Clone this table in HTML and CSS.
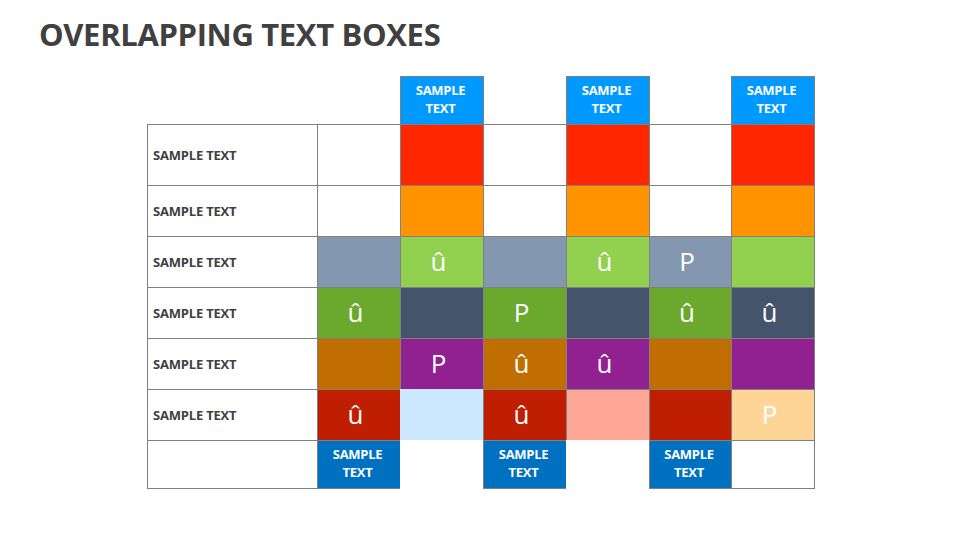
FILE: index.html
```html
<!DOCTYPE html>
<html>
<head>
<meta charset="utf-8">
<link rel="stylesheet" href="styles.css">
</head>
<body>
<h1 class="title">OVERLAPPING TEXT BOXES</h1>
<div class="board">
  <div class="c void wide"></div>
  <div class="c head">SAMPLE<br>TEXT</div>
  <div class="c void"></div>
  <div class="c head">SAMPLE<br>TEXT</div>
  <div class="c void"></div>
  <div class="c head">SAMPLE<br>TEXT</div>

  <div class="c label">SAMPLE TEXT</div>
  <div class="c white"></div>
  <div class="c red"></div>
  <div class="c white"></div>
  <div class="c red"></div>
  <div class="c white"></div>
  <div class="c red"></div>

  <div class="c label">SAMPLE TEXT</div>
  <div class="c white"></div>
  <div class="c orange"></div>
  <div class="c white"></div>
  <div class="c orange"></div>
  <div class="c white"></div>
  <div class="c orange"></div>

  <div class="c label">SAMPLE TEXT</div>
  <div class="c slate"></div>
  <div class="c lime g">û</div>
  <div class="c slate"></div>
  <div class="c lime g">û</div>
  <div class="c slate g">P</div>
  <div class="c lime"></div>

  <div class="c label">SAMPLE TEXT</div>
  <div class="c green g">û</div>
  <div class="c navy"></div>
  <div class="c green g">P</div>
  <div class="c navy"></div>
  <div class="c green g">û</div>
  <div class="c navy g">û</div>

  <div class="c label">SAMPLE TEXT</div>
  <div class="c brown"></div>
  <div class="c purple g">P</div>
  <div class="c brown g">û</div>
  <div class="c purple g">û</div>
  <div class="c brown"></div>
  <div class="c purple"></div>

  <div class="c label">SAMPLE TEXT</div>
  <div class="c crimson g">û</div>
  <div class="c sky plain"></div>
  <div class="c crimson g">û</div>
  <div class="c salmon"></div>
  <div class="c crimson"></div>
  <div class="c peach g">P</div>

  <div class="c white"></div>
  <div class="c foot">SAMPLE<br>TEXT</div>
  <div class="c white plain"></div>
  <div class="c foot">SAMPLE<br>TEXT</div>
  <div class="c white plain"></div>
  <div class="c foot">SAMPLE<br>TEXT</div>
  <div class="c white"></div>
</div>
</body>
</html>
```
FILE: styles.css
```css
html, body {
  margin: 0;
  padding: 0;
  background: #ffffff;
}
body {
  width: 960px;
  height: 540px;
  overflow: hidden;
  font-family: "Open Sans", "Liberation Sans", sans-serif;
}
.title {
  margin: 0;
  padding: 14px 0 0 39px;
  font-size: 31px;
  line-height: 40px;
  font-weight: 700;
  color: #404040;
  letter-spacing: -0.35px;
  height: 63px;
  box-sizing: border-box;
}
.board {
  margin-left: 148px;
  margin-top: 14px;
  display: grid;
  grid-template-columns: 170px 83px 83px 83px 83px 82px 83px;
  grid-template-rows: 48px 61px 51px 51px 51px 51px 51px 48px;
  width: 667px;
}
.c {
  margin: -1px 0 0 -1px;
  border: 1px solid #808080;
  display: flex;
  align-items: center;
  justify-content: center;
  color: #ffffff;
}
.void {
  border: none;
  background: transparent;
}
.wide {
  grid-column: span 2;
}
.plain {
  border: none;
}
.head, .foot {
  font-weight: 700;
  font-size: 13px;
  line-height: 18px;
  text-align: center;
  letter-spacing: -0.3px;
  padding: 0 3px 4px 0;
}
.head { background: #0099ff; }
.foot { background: #0070c0; }
.label {
  justify-content: flex-start;
  padding-left: 5px;
  color: #404040;
  font-weight: 700;
  font-size: 13px;
  letter-spacing: -0.2px;
  background: #ffffff;
}
.g {
  font-size: 26px;
  font-weight: 400;
  padding: 0 7px 2px 0;
}
.white { background: #ffffff; }
.red { background: #ff2600; }
.orange { background: #ff9300; }
.slate { background: #8497b0; }
.lime { background: #92d050; }
.green { background: #6ba82e; }
.navy { background: #44546a; }
.brown { background: #c06e00; }
.purple { background: #912191; }
.crimson { background: #bf1e00; }
.sky { background: #cce8ff; }
.salmon { background: #ffa797; }
.peach { background: #ffd597; }
```
